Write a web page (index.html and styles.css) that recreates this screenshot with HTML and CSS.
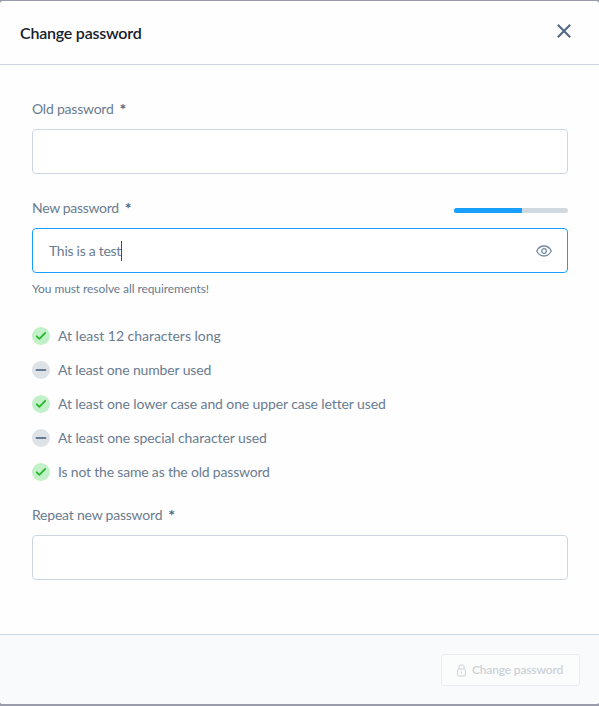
FILE: index.html
```html
<!DOCTYPE html>
<html lang="en">
<head>
<meta charset="utf-8">
<title>Change password</title>
<link rel="stylesheet" href="styles.css">
</head>
<body>
<main class="modal">
  <header class="modal-header">
    <h1 class="title"><span>Change password</span></h1>
    <svg class="close" viewBox="0 0 14 14"><path d="M.8.8 13.200 13.200M13.200.8.8 13.200"/></svg>
  </header>
  <section class="modal-body">
    <div class="field">
      <div class="label"><span class="label-old">Old password</span><b>*</b></div>
      <div class="input"></div>
    </div>
    <div class="field field-new">
      <div class="label"><span class="label-new">New password</span><b>*</b><div class="strength"><div class="strength-value"></div></div></div>
      <div class="input focused"><span class="value">This is a test</span><i class="caret"></i>
        <svg class="eye" viewBox="0 0 16 12"><path d="M.7 6C2.3 2.7 4.9 1 8 1s5.700 1.700 7.300 5C13.700 9.300 11.100 11 8 11S2.300 9.300.7 6Z"/><circle cx="8" cy="6" r="2.300"/></svg>
      </div>
      <p class="help"><span>You must resolve all requirements!</span></p>
    </div>
    <ul class="rules">
      <li class="met"><svg viewBox="0 0 18 18"><path d="m4.800 9.300 2.600 2.500 5.800-5.900"/></svg><span class="r1">At least 12 characters long</span></li>
      <li><svg viewBox="0 0 18 18"><path d="M4.500 9h9"/></svg><span class="r2">At least one number used</span></li>
      <li class="met"><svg viewBox="0 0 18 18"><path d="m4.800 9.300 2.600 2.500 5.800-5.900"/></svg><span class="r3">At least one lower case and one upper case letter used</span></li>
      <li><svg viewBox="0 0 18 18"><path d="M4.500 9h9"/></svg><span class="r4">At least one special character used</span></li>
      <li class="met"><svg viewBox="0 0 18 18"><path d="m4.800 9.300 2.600 2.500 5.800-5.900"/></svg><span class="r5">Is not the same as the old password</span></li>
    </ul>
    <div class="field">
      <div class="label"><span class="label-repeat">Repeat new password</span><b>*</b></div>
      <div class="input"></div>
    </div>
  </section>
  <footer class="modal-footer">
    <button class="submit" disabled><svg viewBox="0 0 9 13"><path d="M2 5V2.500Q2 1 3.500 1h2Q7 1 7 2.500V5M1.500 5h6q.8 0 .8.8v5.400q0 .8-.8.800h-6q-.8 0-.8-.8V5.800q0-.8.800-.8ZM4.500 7.500v2"/></svg><span>Change password</span></button>
  </footer>
</main>
</body>
</html>
```
FILE: styles.css
```css
* { box-sizing: border-box; }
body {
  margin: 0;
  padding: 1px 0 2px;
  height: 706px;
  overflow: hidden;
  background: #9a9bab;
  font: 14px/20px Lato, "Liberation Sans", sans-serif;
  color: #6a7c90;
}
.modal {
  height: 703px;
  display: flex;
  flex-direction: column;
  background: #fefefe;
  border-radius: 3px;
  overflow: hidden;
}
.modal-header {
  height: 64px;
  flex: none;
  display: flex;
  align-items: center;
  justify-content: space-between;
  padding: 0 28px 1px 20px;
  border-bottom: 1px solid #cbd6e0;
}
.title {
  margin: 0;
  padding-top: 2px;
  font-size: 16px;
  font-weight: 600;
  line-height: 24px;
  color: #17202b;
  letter-spacing: -0.22px;
}
.close {
  width: 14px;
  height: 14px;
  margin-bottom: 2px;
  fill: none;
  stroke: #526a83;
  stroke-width: 2.1;
}
.modal-body {
  flex: 1;
  padding: 34px 31px 0 32px;
}
.label {
  height: 20px;
  margin-bottom: 10px;
  display: flex;
  align-items: center;
}
.label-old { letter-spacing: -0.22px; }
.label-new { letter-spacing: -0.32px; }
.label-repeat { letter-spacing: -0.21px; }
.label b {
  margin-left: 6px;
  font-size: 16px;
  color: #52667c;
}
.input {
  width: 536px;
  height: 45px;
  display: flex;
  align-items: center;
  padding: 0 15px 0 16px;
  border: 1px solid #cbd6e0;
  border-radius: 4px;
  background: #fff;
}
.input.focused { border-color: #189eff; }
.value { letter-spacing: -0.28px; }
.field-new { margin-top: 24px; }
.strength {
  width: 114px;
  height: 5px;
  margin: 4px 0 0 auto;
  border-radius: 3px;
  overflow: hidden;
  background: #d1d9e0;
}
.field-new .label { width: 536px; }
.strength-value {
  width: 60%;
  height: 5px;
  background: #189eff;
}
.caret {
  width: 1px;
  height: 20px;
  background: #394d64;
}
.eye {
  width: 16px;
  height: 12px;
  margin-left: auto;
  fill: none;
  stroke: #758ca3;
  stroke-width: 1.3;
}
.help {
  margin: 6px 0 0;
  font-size: 12px;
  letter-spacing: -0.09px;
}
.rules {
  margin: 28px 0 0;
  padding: 0;
  list-style: none;
}
.rules li {
  height: 18px;
  margin-bottom: 16px;
  display: flex;
  align-items: center;
  gap: 8px;
}
.r1 { letter-spacing: -0.02px; }
.r2 { letter-spacing: -0.14px; }
.r3 { letter-spacing: -0.11px; }
.r4 { letter-spacing: -0.09px; }
.r5 { letter-spacing: -0.19px; }
.rules svg {
  width: 18px;
  height: 18px;
  border-radius: 50%;
  background: #dde2e7;
  fill: none;
  stroke: #667b91;
  stroke-width: 1.8;
  stroke-linecap: round;
  stroke-linejoin: round;
}
.rules .met svg {
  background: #c2f0c8;
  stroke: #28b62d;
}
.rules + .field { margin-top: 24px; }
.modal-footer {
  height: 70px;
  flex: none;
  display: flex;
  justify-content: flex-end;
  align-items: center;
  padding: 1px 19px 0 0;
  border-top: 1px solid #cbd6e0;
  background: #f9fafc;
}
.submit {
  width: 139px;
  height: 32px;
  display: flex;
  align-items: center;
  gap: 6px;
  padding: 0 0 0 15px;
  border: 1px solid #eaedf0;
  border-radius: 3px;
  background: #fbfcfc;
  color: #cdd2d8;
  font: 600 12px/20px Lato, "Liberation Sans", sans-serif;
  letter-spacing: -0.17px;
  white-space: nowrap;
}
.submit svg {
  width: 9px;
  height: 13px;
  fill: none;
  stroke: #cdd2d8;
}
```
